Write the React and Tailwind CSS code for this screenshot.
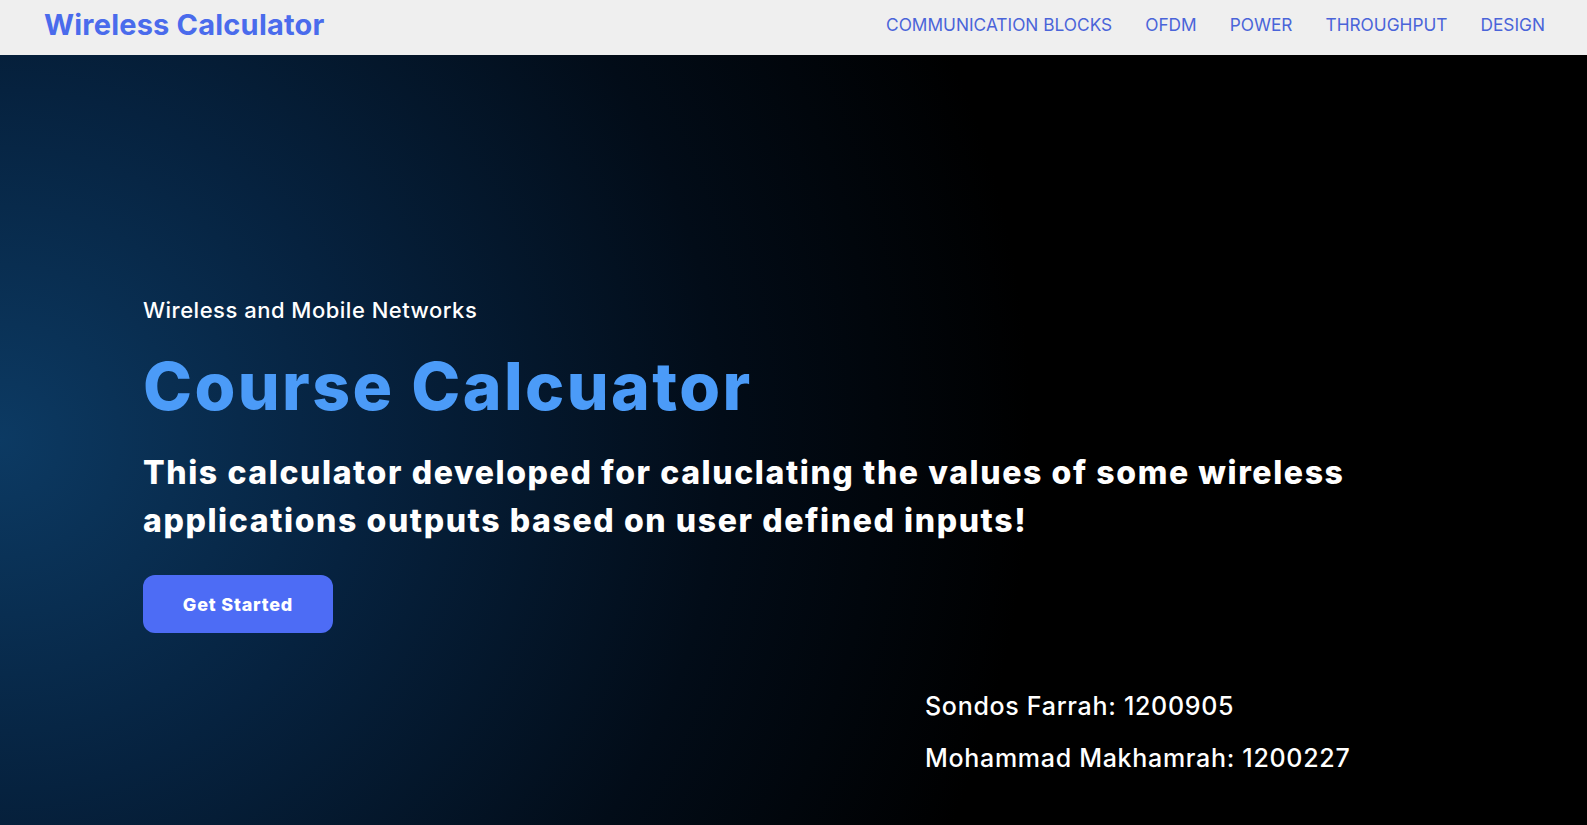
const links = ["COMMUNICATION BLOCKS", "OFDM", "POWER", "THROUGHPUT", "DESIGN"];

function App() {
  return (
    <div className="min-h-screen flex flex-col bg-black font-['Inter',sans-serif]">
      <nav className="h-[55px] flex items-center justify-between bg-[#efefef] pl-[44px] pr-[42px] pb-[6px]">
        <a href="#" className="text-[29px] font-bold text-[#4a6bec] tracking-[0.2px]">
          Wireless Calculator
        </a>
        <ul className="flex items-center gap-[33px]">
          {links.map((l) => (
            <li key={l}>
              <a href="#" className="text-[17.3px] text-[#4a64d9]">
                {l}
              </a>
            </li>
          ))}
        </ul>
      </nav>

      <section className="flex-1 h-[770px] bg-[radial-gradient(ellipse_65%_130%_at_0%_50%,#0c3a63_0%,#06223f_35%,#020c18_70%,#000_100%)]">
        <div className="pl-[143px] pt-[240px]">
          <p className="text-[22px] font-medium text-white leading-[30px] tracking-[0.5px]">
            Wireless and Mobile Networks
          </p>
          <h1 className="mt-[23px] text-[66px] font-extrabold text-[#4b9bf8] leading-[76px] tracking-[2.4px]">
            Course Calcuator
          </h1>
          <p className="mt-[25px] w-[1260px] text-[32px] font-extrabold text-white leading-[48px] tracking-[1.6px]">
            This calculator developed for caluclating the values of some wireless applications outputs based on user defined inputs!
          </p>
          <button className="mt-[30px] w-[190px] h-[58px] rounded-[12px] bg-[#4d6cf5] text-white text-[18px] font-extrabold tracking-[0.8px]">
            Get Started
          </button>
          <div className="ml-[782px] mt-[58px] flex flex-col gap-[22px] text-[25px] font-medium text-white leading-[30px] tracking-[0.7px]">
            <p>Sondos Farrah: 1200905</p>
            <p>Mohammad Makhamrah: 1200227</p>
          </div>
        </div>
      </section>
    </div>
  );
}

export default App;
